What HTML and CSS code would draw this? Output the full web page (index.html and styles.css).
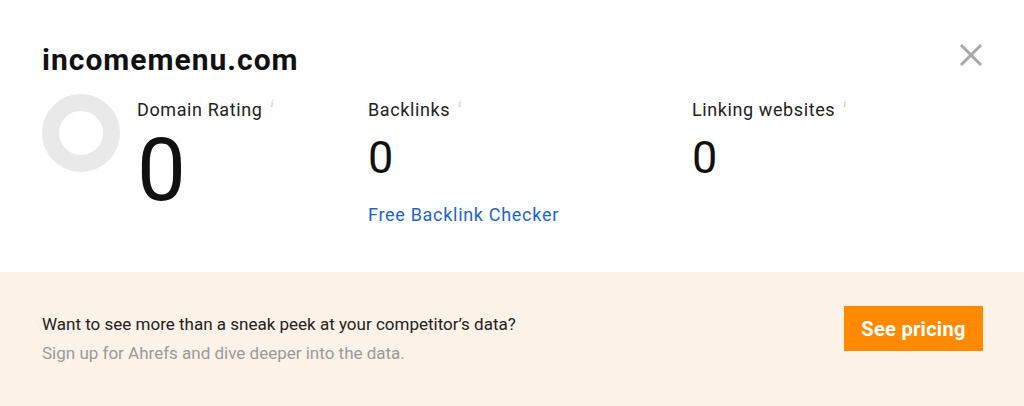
FILE: index.html
```html
<!DOCTYPE html>
<html lang="en">
<head>
<meta charset="utf-8">
<title>incomemenu.com</title>
<link rel="stylesheet" href="styles.css">
</head>
<body>
<div class="modal">
  <section class="top">
    <header class="head">
      <h1 class="domain">incomemenu.com</h1>
      <button class="close" aria-label="Close">
        <svg width="24" height="22" viewBox="0 0 24 22"><path d="M2 1 L22 21 M22 1 L2 21" stroke="#a9a9a9" stroke-width="3" fill="none"/></svg>
      </button>
    </header>
    <div class="stats">
      <div class="stat stat-dr">
        <div class="ring"></div>
        <div class="stat-body">
          <div class="label">Domain Rating <sup class="info">i</sup></div>
          <div class="value value-big">0</div>
        </div>
      </div>
      <div class="stat">
        <div class="stat-body">
          <div class="label">Backlinks <sup class="info">i</sup></div>
          <div class="value">0</div>
          <a class="link" href="#">Free Backlink Checker</a>
        </div>
      </div>
      <div class="stat">
        <div class="stat-body">
          <div class="label">Linking websites <sup class="info">i</sup></div>
          <div class="value">0</div>
        </div>
      </div>
    </div>
  </section>
  <section class="promo">
    <div class="promo-text">
      <p class="promo-main">Want to see more than a sneak peek at your competitor’s data?</p>
      <p class="promo-sub">Sign up for Ahrefs and dive deeper into the data.</p>
    </div>
    <a class="cta" href="#">See pricing</a>
  </section>
</div>
</body>
</html>
```
FILE: styles.css
```css
* { box-sizing: border-box; }
html, body { margin: 0; padding: 0; }
body {
  width: 1024px;
  height: 406px;
  overflow: hidden;
  background: #fff;
  font-family: Roboto, "Liberation Sans", sans-serif;
  color: #222;
}
.modal { display: flex; flex-direction: column; height: 406px; }
.top { height: 272px; padding: 40px 41px 0 42px; }
.head { display: flex; justify-content: space-between; align-items: flex-start; }
.domain {
  margin: 0;
  font-size: 30px;
  line-height: 40px;
  font-weight: 700;
  letter-spacing: 1px;
  color: #111;
}
.close {
  border: 0; background: none; padding: 0; margin-top: 4px;
  width: 24px; height: 22px; cursor: pointer;
}
.close svg { display: block; }
.stats {
  display: grid;
  grid-template-columns: 326px 324px 1fr;
  margin-top: 14px;
}
.stat { display: flex; align-items: flex-start; }
.ring {
  width: 78px; height: 78px;
  border-radius: 50%;
  border: 17px solid #e9e9e9;
  margin-right: 17px;
  flex: none;
}
.label {
  font-size: 18px;
  line-height: 22px;
  letter-spacing: 0.6px;
  color: #222;
  margin-top: 5px;
}
.info {
  font-family: "DejaVu Serif", serif;
  font-size: 10px;
  color: #c4c4c4;
  font-style: italic;
  vertical-align: top;
  position: relative;
  top: -6px;
  margin-left: 3px;
}
.value {
  font-size: 45px;
  line-height: 50px;
  margin-top: 12px;
  color: #111;
}
.value-big {
  font-size: 87px;
  line-height: 86px;
  margin-top: 6px;
}
.link {
  display: block;
  margin-top: 21px;
  font-size: 18px;
  line-height: 22px;
  letter-spacing: 0.7px;
  color: #1d63d3;
  text-decoration: none;
}
.promo {
  flex: 1;
  background: #fdf2e7;
  display: flex;
  align-items: center;
  justify-content: space-between;
  padding: 0 41px 0 42px;
}
.promo-text p { margin: 0; }
.promo-main { font-size: 17px; line-height: 29px; color: #222; }
.promo-sub { font-size: 17px; line-height: 29px; color: #9a9a9a; }
.cta {
  display: flex; align-items: center; justify-content: center;
  width: 139px; height: 45px;
  background: #ff8a00;
  color: #fff;
  font-weight: 700;
  font-size: 20px;
  letter-spacing: 0.3px;
  text-decoration: none;
  margin-bottom: 21px;
}
```
